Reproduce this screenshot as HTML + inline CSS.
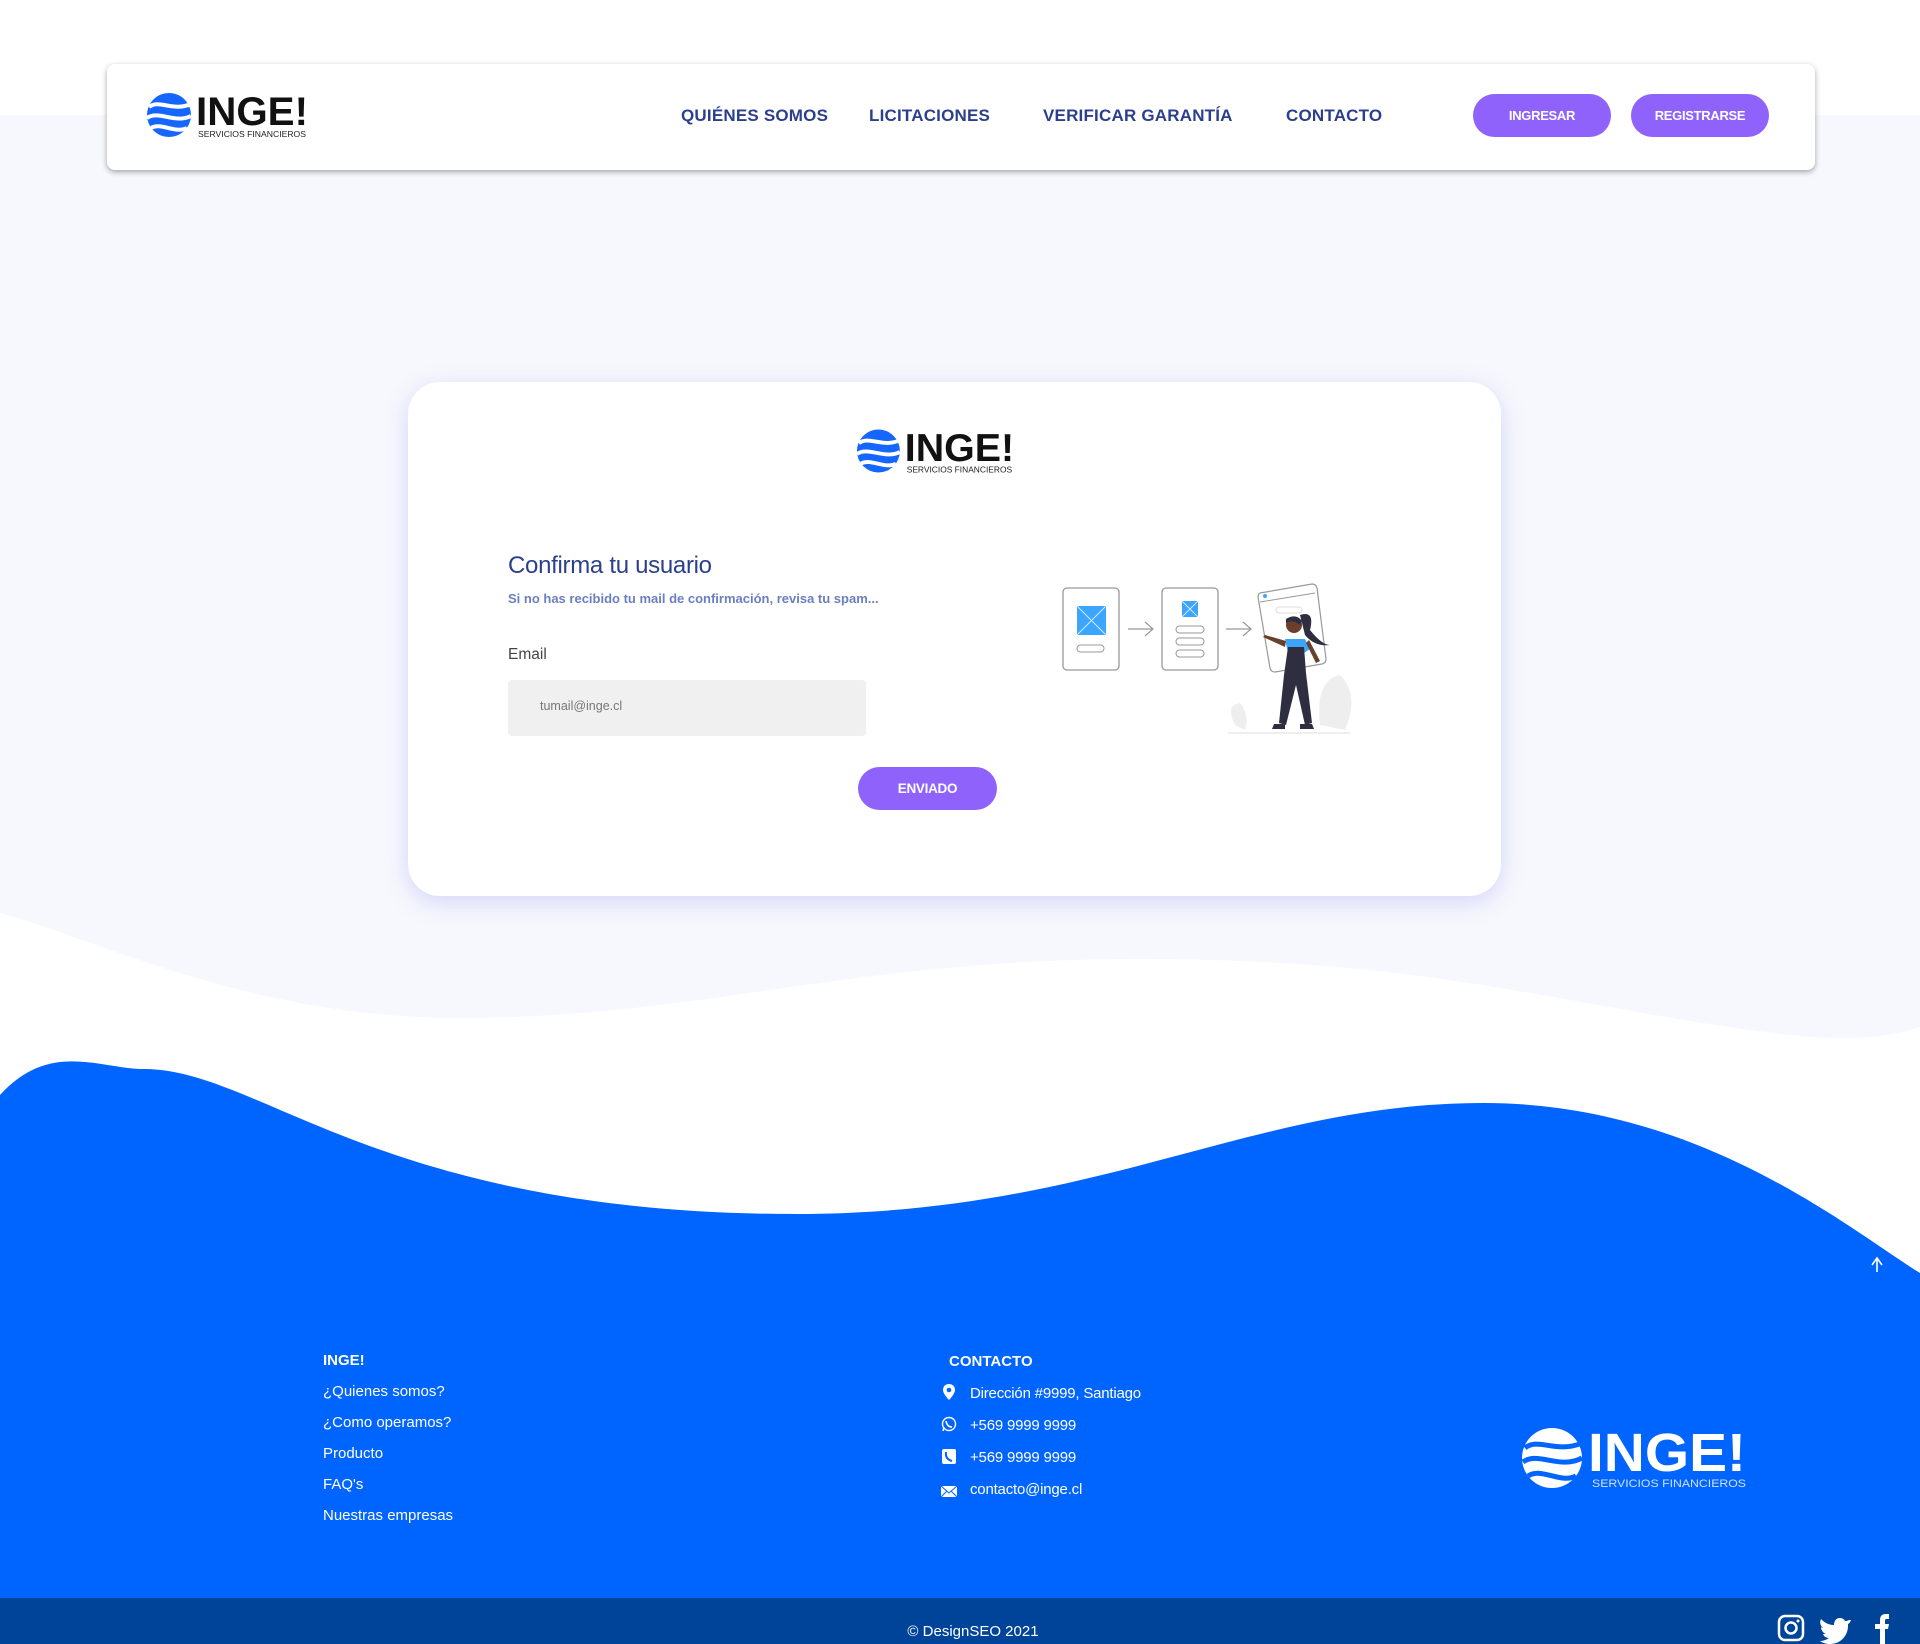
<!DOCTYPE html>
<html><head><meta charset="utf-8"><style>
*{margin:0;padding:0;box-sizing:border-box}
body{width:1920px;height:1644px;position:relative;overflow:hidden;background:#fff;font-family:"Liberation Sans",sans-serif}
.abs{position:absolute}
.nav{color:#2b3f8e;font-size:17px;font-weight:bold;letter-spacing:.2px;top:106px}
.btn{background:#8f63fb;color:#fff;font-size:13px;font-weight:bold;border-radius:22px;display:flex;align-items:center;justify-content:center;letter-spacing:-.3px}
.fl{color:#fff;font-size:15px;left:323px}
.ci{color:#fff;font-size:15px;left:970px;letter-spacing:-.2px}
</style></head><body>
<svg class="abs" style="left:0;top:0" width="1920" height="1644">
<path d="M0,115 L1920,115 L1920,1027 C1880,1040 1840,1040 1800,1036 C1580,1012 1450,959 1139,959 C850,959 700,1018 459,1018 C250,1018 100,940 0,913 Z" fill="#f7f8fd"/>
<path d="M0,1095 C50,1040 100,1069 144,1069 C260,1069 380,1214 796,1214 C1100,1214 1250,1103 1484,1103 C1700,1103 1850,1230 1920,1273 L1920,1598 L0,1598 Z" fill="#0064ff"/>
<rect x="0" y="1598" width="1920" height="46" fill="#00449a"/>
<path d="M1877,1272 V1259 M1872,1265 L1877,1258 L1882,1265" stroke="#fff" stroke-width="1.6" fill="none"/>
</svg>

<div class="abs" style="left:107px;top:64px;width:1708px;height:106px;background:#fff;border-radius:8px;box-shadow:0 2px 6px rgba(0,0,0,.35)"></div>
<svg class="abs" style="left:145px;top:90px" width="166" height="50" viewBox="0 0 166 50">
<g><circle cx="24" cy="25" r="22" fill="#1565ff"/><path d="M4,17 C14,9 28,22 46,14 M2,28 C14,20 30,34 46,26 M6,38 C16,32 30,44 42,38" stroke="#fff" stroke-width="4" fill="none"/></g>
<text x="51" y="35" font-family="Liberation Sans" font-weight="bold" font-size="40" fill="#111" textLength="112" lengthAdjust="spacingAndGlyphs">INGE!</text>
<text x="53" y="47" font-family="Liberation Sans" font-size="8" fill="#222" textLength="108" lengthAdjust="spacingAndGlyphs">SERVICIOS FINANCIEROS</text>
</svg>
<div class="abs nav" style="left:681px">QUIÉNES SOMOS</div>
<div class="abs nav" style="left:869px">LICITACIONES</div>
<div class="abs nav" style="left:1043px">VERIFICAR GARANTÍA</div>
<div class="abs nav" style="left:1286px">CONTACTO</div>
<div class="abs btn" style="left:1473px;top:94px;width:138px;height:43px">INGRESAR</div>
<div class="abs btn" style="left:1631px;top:94px;width:138px;height:43px">REGISTRARSE</div>

<div class="abs" style="left:408px;top:382px;width:1093px;height:514px;background:#fff;border-radius:32px;box-shadow:0 6px 24px rgba(110,110,240,.25)"></div>
<svg class="abs" style="left:855px;top:426px" width="162" height="50" viewBox="0 0 166 50">
<g><circle cx="24" cy="25" r="22" fill="#1565ff"/><path d="M4,17 C14,9 28,22 46,14 M2,28 C14,20 30,34 46,26 M6,38 C16,32 30,44 42,38" stroke="#fff" stroke-width="4" fill="none"/></g>
<text x="51" y="35" font-family="Liberation Sans" font-weight="bold" font-size="40" fill="#111" textLength="112" lengthAdjust="spacingAndGlyphs">INGE!</text>
<text x="53" y="47" font-family="Liberation Sans" font-size="8" fill="#222" textLength="108" lengthAdjust="spacingAndGlyphs">SERVICIOS FINANCIEROS</text>
</svg>
<div class="abs" style="left:508px;top:552px;font-size:24px;color:#2b3f8e;letter-spacing:-.3px">Confirma tu usuario</div>
<div class="abs" style="left:508px;top:591px;font-size:13px;color:#6b7fc0;font-weight:bold">Si no has recibido tu mail de confirmación, revisa tu spam...</div>
<div class="abs" style="left:508px;top:646px;font-size:15.5px;color:#444">Email</div>
<div class="abs" style="left:508px;top:680px;width:358px;height:56px;background:#f0f0f0;border-radius:4px;color:#777;font-size:12.5px;padding:19px 0 0 32px">tumail@inge.cl</div>
<div class="abs btn" style="left:858px;top:767px;width:139px;height:43px;font-size:13.5px">ENVIADO</div>

<svg class="abs" style="left:1060px;top:575px" width="310" height="170" viewBox="0 0 310 170">
<rect x="3" y="13" width="56" height="82" rx="4" fill="#fff" stroke="#999" stroke-width="1.3"/>
<rect x="17" y="31" width="29" height="29" fill="#3ca6ff"/><path d="M17,31 L46,60 M46,31 L17,60" stroke="#fff" stroke-width="0.8"/>
<rect x="17" y="70" width="27" height="7" rx="3.5" fill="none" stroke="#999"/>
<path d="M68,54 H92 M85,47 L93,54 L85,61" stroke="#999" fill="none" stroke-width="1.2"/>
<rect x="102" y="13" width="56" height="82" rx="4" fill="#fff" stroke="#999" stroke-width="1.3"/>
<rect x="122" y="26" width="16" height="16" fill="#3ca6ff"/><path d="M122,26 L138,42 M138,26 L122,42" stroke="#fff" stroke-width="0.8"/>
<rect x="116" y="51" width="28" height="7" rx="3.5" fill="none" stroke="#999"/>
<rect x="116" y="63" width="28" height="7" rx="3.5" fill="none" stroke="#999"/>
<rect x="116" y="75" width="28" height="7" rx="3.5" fill="none" stroke="#999"/>
<path d="M166,54 H190 M183,47 L191,54 L183,61" stroke="#999" fill="none" stroke-width="1.2"/>
<path d="M200,18 L252,9 Q256,9 257,13 L266,84 Q266,88 262,89 L215,97 Q211,97 210,93 L198,22 Q198,19 200,18Z" fill="#fff" stroke="#999" stroke-width="1.2"/>
<path d="M200,27 L255,18" stroke="#999"/><circle cx="205" cy="21" r="2" fill="#3ca6ff"/>
<rect x="216" y="32" width="26" height="6" rx="3" fill="none" stroke="#ddd"/>
<path d="M175,150 Q165,130 180,128 Q190,140 185,155Z M260,150 Q255,105 280,100 Q300,120 285,155Z" fill="#eee"/>
<path d="M168,158 H290" stroke="#ddd"/>
<path d="M240,40 Q255,35 250,55 Q262,70 270,70 Q255,72 245,60Z" fill="#2f2e41"/>
<circle cx="234" cy="50" r="8" fill="#6b3f2a"/>
<path d="M226,44 Q236,38 242,46 L240,50 Q232,44 226,48Z" fill="#2f2e41"/>
<path d="M225,64 L245,64 L250,74 L244,78 L228,78Z" fill="#3ca6ff"/>
<path d="M228,72 L244,72 L246,98 L252,148 L245,150 L236,110 L226,150 L219,148 L224,100Z" fill="#2f2e41"/>
<path d="M226,66 L205,60 L203,62 L225,72Z M246,68 L256,88 L260,86 L249,65Z" fill="#6b3f2a"/>
<path d="M214,149 L225,149 L225,154 L212,154Z M240,149 L252,149 L254,154 L240,154Z" fill="#2f2e41"/>
</svg>

<div class="abs" style="left:323px;top:1352px;color:#fff;font-size:15px;font-weight:bold">INGE!</div>
<div class="abs fl" style="top:1383px">¿Quienes somos?</div>
<div class="abs fl" style="top:1414px">¿Como operamos?</div>
<div class="abs fl" style="top:1445px">Producto</div>
<div class="abs fl" style="top:1476px">FAQ's</div>
<div class="abs fl" style="top:1507px">Nuestras empresas</div>

<div class="abs" style="left:949px;top:1353px;color:#fff;font-size:15px;font-weight:bold">CONTACTO</div>
<svg class="abs" style="left:940px;top:1382px" width="20" height="120" viewBox="0 0 20 120">
<path d="M9,2 C5,2 3,5 3,8 C3,12 9,18 9,18 C9,18 15,12 15,8 C15,5 13,2 9,2Z" fill="#fff"/><circle cx="9" cy="8" r="2.3" fill="#0064ff"/>
<circle cx="9" cy="42" r="6.5" fill="none" stroke="#fff" stroke-width="1.4"/><path d="M3,49 L4,45" stroke="#fff" stroke-width="1.5"/><path d="M6,39 Q7,45 12,45" stroke="#fff" stroke-width="1.6" fill="none"/>
<rect x="2" y="67" width="14" height="15" rx="2" fill="#fff"/><path d="M6,70 Q5,77 12,79" stroke="#0064ff" stroke-width="2" fill="none"/>
<rect x="1" y="104" width="16" height="11" fill="#fff"/><path d="M1,104 L9,111 L17,104 M1,115 L7,109 M17,115 L11,109" stroke="#0064ff" stroke-width="1" fill="none"/>
</svg>
<div class="abs ci" style="top:1385px">Dirección #9999, Santiago</div>
<div class="abs ci" style="top:1417px">+569 9999 9999</div>
<div class="abs ci" style="top:1449px">+569 9999 9999</div>
<div class="abs ci" style="top:1481px">contacto@inge.cl</div>

<svg class="abs" style="left:1520px;top:1424px" width="228" height="68" viewBox="0 0 228 68">
<g><circle cx="32" cy="34" r="30" fill="#fff"/><path d="M5,24 C18,13 36,30 62,19 M3,38 C18,27 40,46 62,34 M8,52 C22,43 40,60 56,52" stroke="#0064ff" stroke-width="5" fill="none"/></g>
<text x="68" y="47" font-family="Liberation Sans" font-weight="bold" font-size="54" fill="#fff" textLength="158" lengthAdjust="spacingAndGlyphs">INGE!</text>
<text x="72" y="63" font-family="Liberation Sans" font-size="11" fill="#cfe0ff" textLength="154" lengthAdjust="spacingAndGlyphs">SERVICIOS FINANCIEROS</text>
</svg>

<div class="abs" style="left:0;width:1946px;text-align:center;top:1623px;color:#fff;font-size:15px">© DesignSEO 2021</div>
<svg class="abs" style="left:1776px;top:1612px" width="120" height="32" viewBox="0 0 120 32">
<rect x="3" y="4" width="24" height="24" rx="6" fill="none" stroke="#fff" stroke-width="2.5"/><circle cx="15" cy="16" r="5.5" fill="none" stroke="#fff" stroke-width="2.5"/><circle cx="22" cy="9" r="1.5" fill="#fff"/>
<path d="M73,8 C71,9 70,9 69,9 C68,7 66,6 64,6 C60,6 58,9 58,13 C52,13 48,10 45,7 C43,11 45,14 47,16 C46,16 45,15 45,15 C45,18 47,21 50,22 C49,22 48,22 47,22 C48,25 51,26 53,26 C50,28 47,29 44,29 C47,31 50,32 54,32 C66,32 72,22 72,14 L72,12 C74,11 74,10 75,8Z" fill="#fff"/>
<path d="M104,32 V17 H99 V12 H104 V8 C104,4 106,2 110,2 H113 V7 H111 C109,7 109,8 109,9 V12 H113 L112,17 H109 V32Z" fill="#fff"/>
</svg>
</body></html>
